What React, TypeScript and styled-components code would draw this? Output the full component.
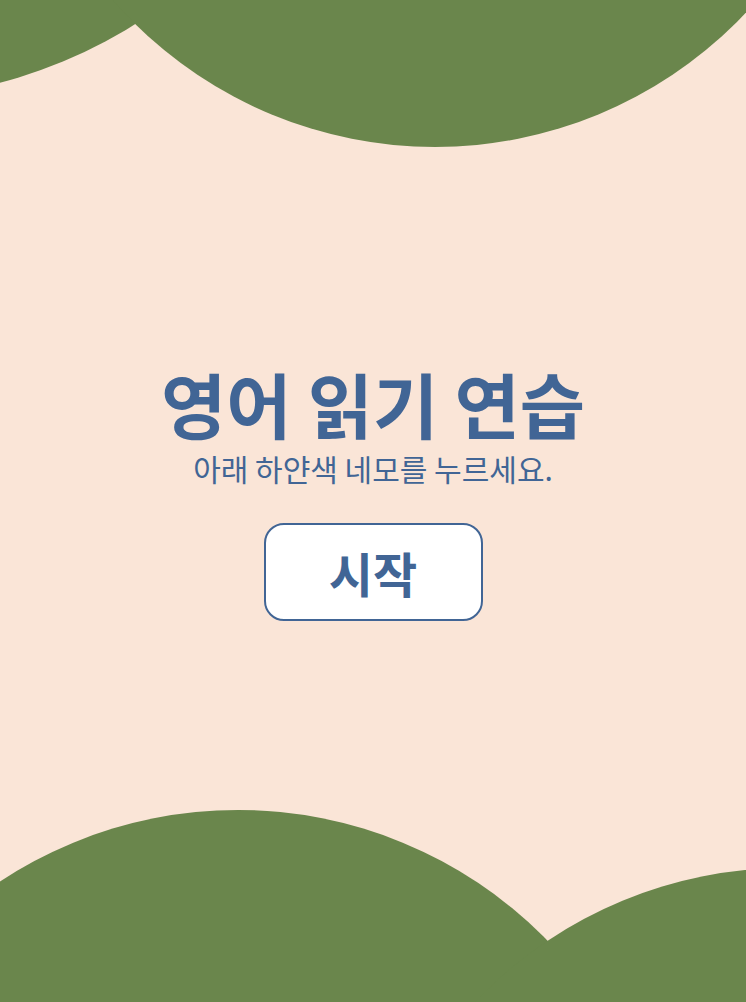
import React from "react";
import styled, { createGlobalStyle } from "styled-components";

const GlobalStyle = createGlobalStyle`
  html, body {
    margin: 0;
    padding: 0;
    background: #fae5d7;
  }
  #root {
    min-height: 100vh;
  }
`;

const Page = styled.div`
  position: relative;
  width: 100%;
  height: 100vh;
  overflow: hidden;
  background: #fae5d7;
  font-family: "Noto Sans CJK KR", "Noto Sans", sans-serif;
  color: #416595;
`;

const Backdrop = styled.svg`
  position: absolute;
  inset: 0;
  width: 100%;
  height: 100%;
  z-index: 0;
`;

const Content = styled.main`
  position: relative;
  z-index: 1;
  height: 100%;
  display: flex;
  flex-direction: column;
  align-items: center;
  justify-content: center;
  padding-bottom: 21px;
  box-sizing: border-box;
`;

const Title = styled.h1`
  margin: 0;
  font-size: 71px;
  font-weight: 700;
  line-height: 1.2;
  letter-spacing: 0;
`;

const Subtitle = styled.p`
  margin: 4px 0 0;
  font-size: 30px;
  font-weight: 400;
  line-height: 1.2;
`;

const StartButton = styled.button`
  margin-top: 37px;
  width: 219px;
  height: 98px;
  box-sizing: border-box;
  background: #ffffff;
  border: 2px solid #416595;
  border-radius: 20px;
  font-family: "Noto Sans CJK KR", "Noto Sans", sans-serif;
  font-size: 48px;
  font-weight: 700;
  color: #416595;
  cursor: pointer;
  display: flex;
  align-items: center;
  justify-content: center;
  padding: 0;
`;

export default function App() {
  return (
    <>
      <GlobalStyle />
      <Page>
        <Backdrop viewBox="0 0 746 1002" preserveAspectRatio="none" aria-hidden="true">
          <g fill="#6a864c">
            <circle cx="-120" cy="-380" r="478" />
            <circle cx="435" cy="-280" r="427" />
            <circle cx="238" cy="1242" r="432" />
            <circle cx="787" cy="1298" r="430" />
          </g>
        </Backdrop>
        <Content>
          <Title>영어 읽기 연습</Title>
          <Subtitle>아래 하얀색 네모를 누르세요.</Subtitle>
          <StartButton>시작</StartButton>
        </Content>
      </Page>
    </>
  );
}
